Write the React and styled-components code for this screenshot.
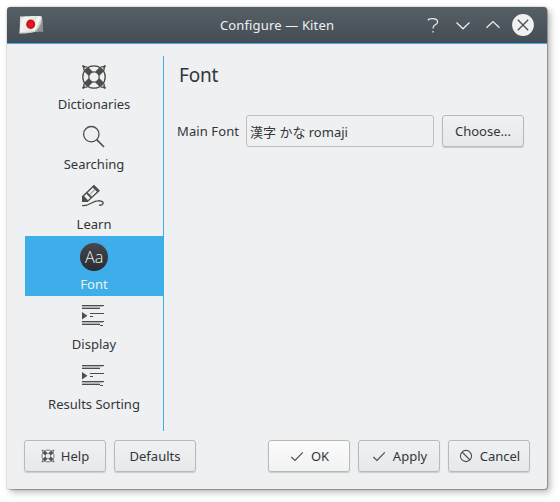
import React from 'react';
import styled, { createGlobalStyle, css } from 'styled-components';

const GlobalStyle = createGlobalStyle`
  * { box-sizing: border-box; }
  body {
    margin: 0;
    background: #fff;
    font-family: "Noto Sans", "Noto Sans CJK JP", sans-serif;
    font-size: 13px;
    line-height: 18px;
    color: #31363b;
  }
  svg { display: block; flex: none; }
`;

const Desktop = styled.div`
  height: 502px;
  padding: 7px 13px 13px 7px;
  overflow: hidden;
`;

const Window = styled.main`
  display: flex;
  flex-direction: column;
  height: 482px;
  background: #eff0f1;
  border-radius: 4px 4px 3px 3px;
  box-shadow: 0 0 0 1px rgba(0, 0, 0, 0.08), 1px 1px 1px rgba(0, 0, 0, 0.22), 3px 3px 7px rgba(0, 0, 0, 0.3);
`;

const TitleBar = styled.header`
  display: grid;
  grid-template-columns: 118px 1fr 118px;
  align-items: center;
  height: 37px;
  padding: 0 12px;
  color: #eff0f1;
  background: linear-gradient(#566067, #454c53);
  border-bottom: 1px solid #3daee9;
  border-radius: 3px 3px 0 0;
`;

const Title = styled.h1`
  margin: 0;
  font-size: 13px;
  letter-spacing: 0.15px;
  font-weight: 400;
  text-align: center;
`;

const WindowControls = styled.div`
  display: flex;
  justify-content: flex-end;
  gap: 6px;
`;

const Body = styled.div`
  display: flex;
  height: 375px;
  margin: 12px 0 0 18px;
`;

const PageList = styled.nav`
  width: 139px;
  border-right: 1px solid #3daee9;
`;

const PageItem = styled.div`
  display: flex;
  flex-direction: column;
  align-items: center;
  height: 60px;
  padding-top: 5px;
  gap: 2px;
  white-space: nowrap;
  ${({ $selected }) => $selected && css`
    color: #eff0f1;
    background: #3daee9;
  `}
`;

const Page = styled.section`
  flex: 1;
  padding: 6px 23px 0 13px;
`;

const PageHeading = styled.h2`
  margin: 0 0 27px 2px;
  font-size: 19px;
  letter-spacing: -0.2px;
  font-weight: 400;
  line-height: 26px;
`;

const FormRow = styled.div`
  display: flex;
  align-items: center;
`;

const FieldLabel = styled.label`
  width: 69px;
  letter-spacing: 0.1px;
  white-space: nowrap;
`;

const FontPreview = styled.div`
  width: 188px;
  height: 32px;
  margin-right: 8px;
  padding: 7px 3px 5px;
  border: 1px solid #bcbebf;
  border-radius: 3px;
  white-space: nowrap;
`;

const Button = styled.button`
  display: flex;
  align-items: center;
  justify-content: center;
  gap: 6px;
  width: 82px;
  height: 32px;
  padding: 0 0 1px;
  font: inherit;
  color: inherit;
  white-space: nowrap;
  background: ${({ $primary }) => ($primary ? 'linear-gradient(#fcfcfc, #f1f2f2)' : 'linear-gradient(#f0f1f2, #e7e8ea)')};
  border: 1px solid #b7b9ba;
  border-radius: 3px;
  box-shadow: 0 1px 1px rgba(0, 0, 0, 0.16);
`;

const ButtonBar = styled.footer`
  display: flex;
  gap: 8px;
  padding: 9px 17px 0;
`;

const Spacer = styled.div`
  flex: 1;
`;

const Flag = () => (
  <svg width="26" height="22" viewBox="0 0 26 22">
    <defs>
      <linearGradient id="cloth" x2="1" y2=".3">
        <stop stopColor="#d6d6d3" /><stop offset=".25" stopColor="#f5f5f3" />
        <stop offset=".65" stopColor="#e3e3e0" /><stop offset=".8" stopColor="#fafaf8" />
        <stop offset="1" stopColor="#aaa9a5" />
      </linearGradient>
      <radialGradient id="sun"><stop stopColor="#ed2027" /><stop offset="1" stopColor="#c80f14" /></radialGradient>
    </defs>
    <path d="M1.2 2.2C6 3 12 1.5 22.6 2.3 24 7 23.4 12 24.3 17.6 17 16.6 9 19.8.4 19.3 1.2 13 .7 7 1.2 2.2Z" fill="url(#cloth)" />
    <path d="M22.8 5Q22.5 13.5 15 17.5L24.3 17.6Q23.3 11 22.8 5Z" fill="#85847f" opacity=".65" />
    <path d="M.5 19 8 18.7 15 17.5" fill="none" stroke="#c9c7bf" />
    <ellipse cx="11.7" cy="10.3" rx="4.5" ry="4.7" fill="url(#sun)" />
  </svg>
);

const controlPaths = {
  help: 'M7 7.2Q7.6 5.6 11.5 5.6 16.6 5.6 16.6 8.8 16.6 10.8 14 12 12 13 12 15.5M12 18V19.6',
  down: 'M5.5 9.5 12 15.8 18.5 9.5',
  up: 'M5.5 14.8 12 8.5 18.5 14.8',
};

const ControlIcon = ({ name }) => (
  <svg width="24" height="24" viewBox="0 0 24 24">
    <path d={controlPaths[name]} fill="none" stroke="#eff0f1" strokeWidth="1.2" />
  </svg>
);

const CloseIcon = () => (
  <svg width="24" height="24" viewBox="0 0 24 24">
    <circle cx="12" cy="12" r="10.9" fill="#eff0f1" />
    <path d="M6.8 6.8 17.2 17.2M17.2 6.8 6.8 17.2" stroke="#454c53" strokeWidth="1.25" />
  </svg>
);

const LifebuoyIcon = ({ size = 32, viewBox = '0 0 32 32' }) => (
  <svg width={size} height={size} viewBox={viewBox}>
    <g fill="none" stroke="#4d4d4d">
      <circle cx="16" cy="16" r="11.2" strokeWidth="1.3" />
      <circle cx="16" cy="16" r="5.2" strokeWidth="1.2" />
      <path d="M8.2 8.2 12.6 12.6M23.8 8.2 19.4 12.6M8.2 23.8 12.6 19.4M23.8 23.8 19.4 19.4" strokeWidth="5.8" />
      <path d="M9.3 5.9 7 5.9 5.2 4.8 4.8 5.2 5.9 7V9.3M22.7 5.9H25L26.8 4.8 27.2 5.2 26.1 7V9.3M9.3 26.1H7L5.2 27.2 4.8 26.8 5.9 25V22.7M22.7 26.1H25L26.8 27.2 27.2 26.8 26.1 25V22.7" strokeWidth="1.4" />
    </g>
    <path d="M7.2 6.8h1v1h-1zM23.8 6.8h1v1h-1zM7.2 24.2h1v1h-1zM23.8 24.2h1v1h-1z" fill="#c9cacb" />
  </svg>
);

const SearchIcon = () => (
  <svg width="32" height="32" viewBox="0 0 32 32" fill="none" stroke="#4d4d4d">
    <circle cx="13.3" cy="13.2" r="7.7" strokeWidth="1.3" />
    <path d="M18.7 18.6 26 26" strokeWidth="1.6" />
  </svg>
);

const PencilIcon = () => (
  <svg width="32" height="32" viewBox="0 0 32 32" fill="none" stroke="#4d4d4d">
    <path d="M16 4.8 20.9 9.7 9.5 20.4 4.6 15.5Z" strokeWidth="1.4" />
    <path d="M4 15.2 5.8 14.8 10.2 19.6 9.5 21H4Z" fill="#4d4d4d" stroke="none" />
    <path d="M8.8 11.9 13.3 16.5" strokeWidth="1.8" />
    <path d="M15 5.2 20.6 10.6" strokeWidth="2.3" />
    <path d="M11.4 13.8 17.3 8.2" strokeWidth=".7" />
    <path d="M4 24.6C12 25.4 14 19.8 20 19.7 24.8 19.5 26.6 22 23.8 23.8 22.8 24.5 21.7 24.3 21 23.8" strokeWidth="1.4" />
  </svg>
);

const FontIcon = () => (
  <svg width="32" height="32" viewBox="0 0 32 32">
    <defs><linearGradient id="disc" x2="0" y2="1"><stop stopColor="#44484c" /><stop offset="1" stopColor="#292c2f" /></linearGradient></defs>
    <circle cx="16" cy="16" r="14" fill="url(#disc)" />
    <text x="16.2" y="21.8" textAnchor="middle" fontFamily="Open Sans, sans-serif" fontWeight="300" fontSize="16.3" fill="#eff0f1">Aa</text>
  </svg>
);

const ParagraphIcon = () => (
  <svg width="32" height="32" viewBox="0 0 32 32" shapeRendering="crispEdges">
    <path d="M4 5H25V6H22V7H4ZM4 21H25V22H22V23H4Z" fill="#b5b6b7" />
    <path d="M4 4H25.6V5H4ZM4 7H22V8H4ZM12 12H25.6V13H12ZM12 15H15V16H12ZM4 20H25.6V21H4ZM4 23H22V24H4ZM22 24H25V25H22Z" fill="#4d4d4d" />
    <path d="M4 11 9.4 14.7 4 18.5Z" fill="#4d4d4d" shapeRendering="auto" />
  </svg>
);

const CheckIcon = () => (
  <svg width="16" height="16" viewBox="0 0 16 16">
    <path d="M2.3 9 6 12.4 13.8 4.3" fill="none" stroke="#4d4d4d" strokeWidth="1.15" />
  </svg>
);

const CancelIcon = () => (
  <svg width="16" height="16" viewBox="0 0 16 16" fill="none" stroke="#4d4d4d" strokeWidth="1.1">
    <circle cx="8" cy="8" r="5.6" />
    <path d="M4 4 12 12" />
  </svg>
);

const pages = [
  { label: 'Dictionaries', Icon: LifebuoyIcon },
  { label: 'Searching', Icon: SearchIcon },
  { label: 'Learn', Icon: PencilIcon },
  { label: 'Font', Icon: FontIcon, selected: true },
  { label: 'Display', Icon: ParagraphIcon },
  { label: 'Results Sorting', Icon: ParagraphIcon },
];

export default function App() {
  return (
    <Desktop>
      <GlobalStyle />
      <Window>
        <TitleBar>
          <Flag />
          <Title>Configure — Kiten</Title>
          <WindowControls>
            <ControlIcon name="help" />
            <ControlIcon name="down" />
            <ControlIcon name="up" />
            <CloseIcon />
          </WindowControls>
        </TitleBar>
        <Body>
          <PageList>
            {pages.map(({ label, Icon, selected }) => (
              <PageItem key={label} $selected={selected}>
                <Icon />
                {label}
              </PageItem>
            ))}
          </PageList>
          <Page>
            <PageHeading>Font</PageHeading>
            <FormRow>
              <FieldLabel>Main Font</FieldLabel>
              <FontPreview>漢字 かな romaji</FontPreview>
              <Button>Choose...</Button>
            </FormRow>
          </Page>
        </Body>
        <ButtonBar>
          <Button><LifebuoyIcon size={14} viewBox="3 3 26 26" />Help</Button>
          <Button>Defaults</Button>
          <Spacer />
          <Button $primary><CheckIcon />OK</Button>
          <Button><CheckIcon />Apply</Button>
          <Button><CancelIcon />Cancel</Button>
        </ButtonBar>
      </Window>
    </Desktop>
  );
}
